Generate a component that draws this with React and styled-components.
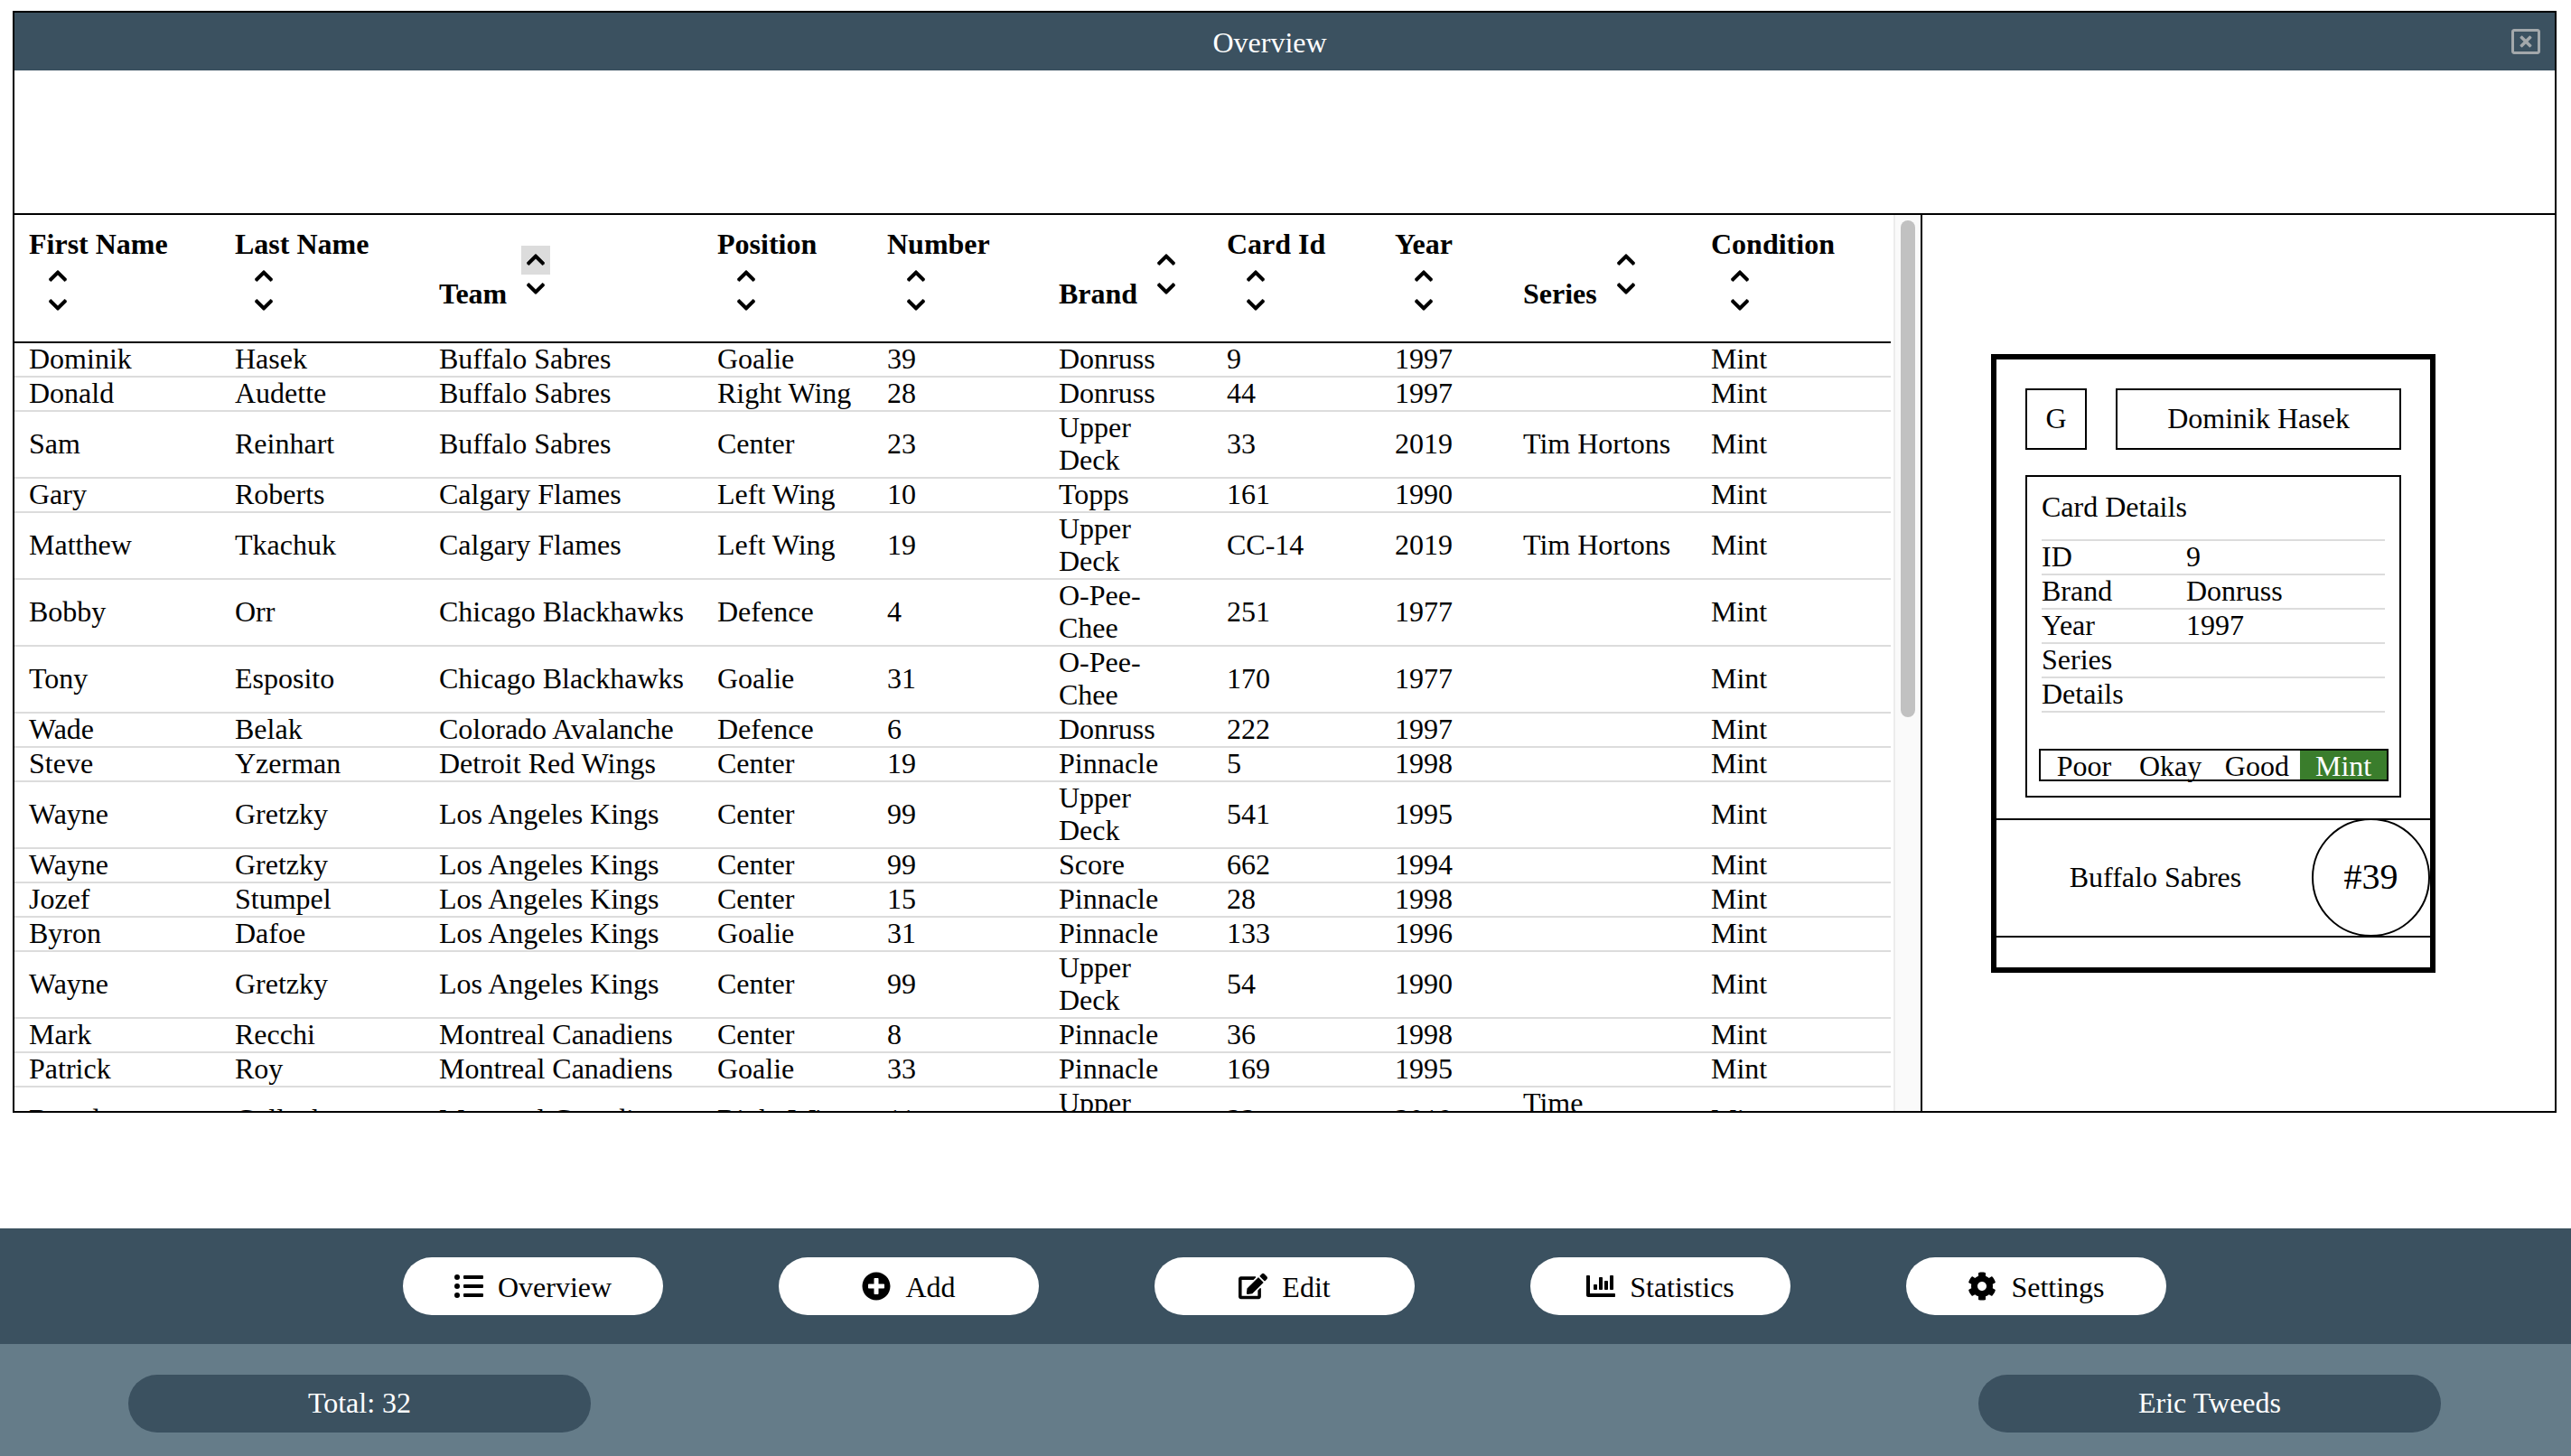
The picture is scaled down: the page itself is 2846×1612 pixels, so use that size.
import React from "react";
import styled, { createGlobalStyle } from "styled-components";
import {
  FaChartBar,
  FaChevronDown,
  FaChevronUp,
  FaCog,
  FaEdit,
  FaListUl,
  FaPlusCircle,
  FaRegWindowClose,
} from "react-icons/fa";

const slate = "#3b5160";
const slateLight = "#657c89";
const rule = "#dcdcdc";

const GlobalStyle = createGlobalStyle`
  * {
    box-sizing: border-box;
  }
  body {
    margin: 0;
    background: #fff;
    color: #000;
    font-family: "Liberation Serif", "Times New Roman", serif;
    font-size: 32px;
    line-height: 36px;
  }
`;

const Page = styled.div`
  display: flex;
  flex-direction: column;
  height: 100vh;
  overflow: hidden;
`;

const Main = styled.main`
  flex: 1;
  min-height: 0;
  padding: 12px 16px 0 14px;
`;

const Window = styled.section`
  display: flex;
  flex-direction: column;
  height: 1220px;
  border: 2px solid #000;
`;

const TitleBar = styled.header`
  display: flex;
  align-items: center;
  height: 64px;
  padding-right: 16px;
  background: ${slate};
`;

const Title = styled.h1`
  flex: 1;
  margin: 0;
  padding: 2px 0 0 15px;
  color: #fff;
  font-size: 32px;
  font-weight: normal;
  text-align: center;
`;

const CloseIcon = styled(FaRegWindowClose)`
  width: 32px;
  height: 32px;
  color: #a3a8ab;
`;

const FilterArea = styled.div`
  height: 160px;
  border-bottom: 2px solid #000;
`;

const Content = styled.div`
  flex: 1;
  min-height: 0;
  display: flex;
`;

const ListPane = styled.div`
  display: flex;
  width: 2112px;
  border-right: 2px solid #000;
`;

const TableViewport = styled.div`
  flex: 1;
  min-width: 0;
  overflow: hidden;
`;

const ScrollTrack = styled.div`
  flex: 0 0 30px;
  padding: 6px 6px 0;
  background: #fafafa;
  border-left: 2px solid #ececec;
`;

const ScrollThumb = styled.div`
  height: 550px;
  border-radius: 8px;
  background: #c1c1c1;
`;

const CardTable = styled.table`
  width: 2077px;
  table-layout: fixed;
  border-collapse: separate;
  border-spacing: 0;
`;

const HeadCell = styled.th`
  height: 142px;
  padding: 0 16px 4px;
  border-bottom: 2px solid #000;
  font-weight: bold;
  text-align: left;
  vertical-align: middle;
`;

const Cell = styled.td`
  padding: 0 16px;
  border-bottom: 2px solid ${rule};
  vertical-align: middle;
`;

const CellText = styled.div`
  min-height: 36px;
  margin: -1px 0 1px;
`;

const SortControl = styled.span`
  display: inline-block;
  width: 32px;
  height: 64px;
  margin: 2px 0 0 16px;
  overflow: hidden;
  vertical-align: baseline;
`;

const SortButton = styled.span`
  display: flex;
  align-items: center;
  justify-content: center;
  width: 32px;
  height: 32px;
  background: ${(p) => (p.$active ? rule : "transparent")};

  svg {
    width: 20px;
    height: 23px;
    stroke: currentColor;
    stroke-width: 16;
  }
`;

const CardPanel = styled.aside`
  flex: 1;
  display: flex;
  align-items: center;
  padding-left: 76px;
`;

const Card = styled.article`
  width: 492px;
  height: 685px;
  padding-top: 32px;
  border: 6px solid #000;
`;

const CardHead = styled.div`
  display: flex;
  gap: 32px;
  margin: 0 32px 28px;
`;

const Outlined = styled.div`
  display: flex;
  align-items: center;
  justify-content: center;
  height: 68px;
  padding-bottom: 2px;
  border: 2px solid #000;
`;

const PositionBox = styled(Outlined)`
  flex: 0 0 68px;
`;

const NameBox = styled(Outlined)`
  flex: 1;
`;

const Details = styled.div`
  height: 357px;
  margin: 0 32px 23px;
  padding: 15px 12px 0 13px;
  border: 2px solid #000;
`;

const DetailsTitle = styled.div`
  margin: 0 0 18px 3px;
`;

const DetailList = styled.div`
  margin: 0 4px 40px 3px;
  border-top: 2px solid ${rule};
`;

const DetailRow = styled.div`
  display: grid;
  grid-template-columns: 160px 1fr;
  height: 38px;
  border-bottom: 2px solid ${rule};
  line-height: 34px;
`;

const ConditionBar = styled.div`
  display: grid;
  grid-template-columns: repeat(4, 1fr);
  height: 36px;
  border: 2px solid #000;
`;

const Condition = styled.span`
  height: 32px;
  line-height: 34px;
  text-align: center;
  background: ${(p) => (p.$selected ? "#3a7d2c" : "transparent")};
  color: ${(p) => (p.$selected ? "#fff" : "#000")};
`;

const TeamBand = styled.div`
  display: flex;
  align-items: center;
  height: 132px;
  border-top: 2px solid #000;
  border-bottom: 2px solid #000;
`;

const TeamName = styled.div`
  flex: 1;
  padding: 0 0 2px 3px;
  text-align: center;
`;

const NumberBadge = styled.div`
  display: flex;
  align-items: center;
  justify-content: center;
  flex: 0 0 131px;
  height: 131px;
  padding-bottom: 2px;
  border: 2px solid #000;
  border-radius: 50%;
  background: #fff;
  font-size: 40px;
`;

const Nav = styled.nav`
  display: flex;
  align-items: center;
  justify-content: center;
  gap: 128px;
  height: 128px;
  padding-right: 2px;
  background: ${slate};
`;

const NavButton = styled.button`
  display: flex;
  align-items: center;
  justify-content: center;
  gap: 16px;
  width: 288px;
  height: 64px;
  padding: 0;
  border: none;
  border-radius: 32px;
  background: #fff;
  color: #000;
  font: inherit;

  svg {
    height: 32px;
    width: auto;
  }
`;

const NavLabel = styled.span`
  padding-top: 2px;
`;

const StatusBar = styled.footer`
  display: flex;
  align-items: center;
  justify-content: space-between;
  height: 124px;
  padding: 8px 144px 0 142px;
  background: ${slateLight};
`;

const StatusPill = styled.div`
  display: flex;
  align-items: center;
  justify-content: center;
  width: 512px;
  height: 64px;
  padding-bottom: 2px;
  border-radius: 32px;
  background: ${slate};
  color: #fff;
`;

const columns = [
  { label: "First Name", width: 228 },
  { label: "Last Name", width: 226 },
  { label: "Team", width: 308, active: true },
  { label: "Position", width: 188 },
  { label: "Number", width: 190 },
  { label: "Brand", width: 186 },
  { label: "Card Id", width: 186 },
  { label: "Year", width: 142 },
  { label: "Series", width: 208 },
  { label: "Condition", width: 215 },
];

const cards = [
  ["Dominik", "Hasek", "Buffalo Sabres", "Goalie", "39", "Donruss", "9", "1997", "", "Mint"],
  ["Donald", "Audette", "Buffalo Sabres", "Right Wing", "28", "Donruss", "44", "1997", "", "Mint"],
  ["Sam", "Reinhart", "Buffalo Sabres", "Center", "23", "Upper Deck", "33", "2019", "Tim Hortons", "Mint"],
  ["Gary", "Roberts", "Calgary Flames", "Left Wing", "10", "Topps", "161", "1990", "", "Mint"],
  ["Matthew", "Tkachuk", "Calgary Flames", "Left Wing", "19", "Upper Deck", "CC-14", "2019", "Tim Hortons", "Mint"],
  ["Bobby", "Orr", "Chicago Blackhawks", "Defence", "4", "O-Pee-Chee", "251", "1977", "", "Mint"],
  ["Tony", "Esposito", "Chicago Blackhawks", "Goalie", "31", "O-Pee-Chee", "170", "1977", "", "Mint"],
  ["Wade", "Belak", "Colorado Avalanche", "Defence", "6", "Donruss", "222", "1997", "", "Mint"],
  ["Steve", "Yzerman", "Detroit Red Wings", "Center", "19", "Pinnacle", "5", "1998", "", "Mint"],
  ["Wayne", "Gretzky", "Los Angeles Kings", "Center", "99", "Upper Deck", "541", "1995", "", "Mint"],
  ["Wayne", "Gretzky", "Los Angeles Kings", "Center", "99", "Score", "662", "1994", "", "Mint"],
  ["Jozef", "Stumpel", "Los Angeles Kings", "Center", "15", "Pinnacle", "28", "1998", "", "Mint"],
  ["Byron", "Dafoe", "Los Angeles Kings", "Goalie", "31", "Pinnacle", "133", "1996", "", "Mint"],
  ["Wayne", "Gretzky", "Los Angeles Kings", "Center", "99", "Upper Deck", "54", "1990", "", "Mint"],
  ["Mark", "Recchi", "Montreal Canadiens", "Center", "8", "Pinnacle", "36", "1998", "", "Mint"],
  ["Patrick", "Roy", "Montreal Canadiens", "Goalie", "33", "Pinnacle", "169", "1995", "", "Mint"],
  ["Brendan", "Gallagher", "Montreal Canadiens", "Right Wing", "11", "Upper Deck", "33", "2019", "Time Capsule", "Mint"],
];

const details = [
  ["ID", "9"],
  ["Brand", "Donruss"],
  ["Year", "1997"],
  ["Series", ""],
  ["Details", ""],
];

const conditions = ["Poor", "Okay", "Good", "Mint"];

const navItems = [
  { label: "Overview", Icon: FaListUl },
  { label: "Add", Icon: FaPlusCircle },
  { label: "Edit", Icon: FaEdit },
  { label: "Statistics", Icon: FaChartBar },
  { label: "Settings", Icon: FaCog },
];

const App = () => {
  return (
    <Page>
      <GlobalStyle />
      <Main>
        <Window>
          <TitleBar>
            <Title>Overview</Title>
            <CloseIcon />
          </TitleBar>
          <FilterArea />
          <Content>
            <ListPane>
              <TableViewport>
                <CardTable>
                  <colgroup>
                    {columns.map((c) => (
                      <col key={c.label} width={c.width} />
                    ))}
                  </colgroup>
                  <thead>
                    <tr>
                      {columns.map((c) => (
                        <HeadCell key={c.label}>
                          {c.label}
                          <SortControl>
                            <SortButton $active={c.active}>
                              <FaChevronUp />
                            </SortButton>
                            <SortButton>
                              <FaChevronDown />
                            </SortButton>
                          </SortControl>
                        </HeadCell>
                      ))}
                    </tr>
                  </thead>
                  <tbody>
                    {cards.map((card, i) => (
                      <tr key={i}>
                        {card.map((value, j) => (
                          <Cell key={j}>
                            <CellText>{value}</CellText>
                          </Cell>
                        ))}
                      </tr>
                    ))}
                  </tbody>
                </CardTable>
              </TableViewport>
              <ScrollTrack>
                <ScrollThumb />
              </ScrollTrack>
            </ListPane>
            <CardPanel>
              <Card>
                <CardHead>
                  <PositionBox>G</PositionBox>
                  <NameBox>Dominik Hasek</NameBox>
                </CardHead>
                <Details>
                  <DetailsTitle>Card Details</DetailsTitle>
                  <DetailList>
                    {details.map(([label, value]) => (
                      <DetailRow key={label}>
                        <span>{label}</span>
                        <span>{value}</span>
                      </DetailRow>
                    ))}
                  </DetailList>
                  <ConditionBar>
                    {conditions.map((c) => (
                      <Condition key={c} $selected={c === "Mint"}>
                        {c}
                      </Condition>
                    ))}
                  </ConditionBar>
                </Details>
                <TeamBand>
                  <TeamName>Buffalo Sabres</TeamName>
                  <NumberBadge>#39</NumberBadge>
                </TeamBand>
              </Card>
            </CardPanel>
          </Content>
        </Window>
      </Main>
      <Nav>
        {navItems.map(({ label, Icon }) => (
          <NavButton key={label}>
            <Icon />
            <NavLabel>{label}</NavLabel>
          </NavButton>
        ))}
      </Nav>
      <StatusBar>
        <StatusPill>Total: 32</StatusPill>
        <StatusPill>Eric Tweeds</StatusPill>
      </StatusBar>
    </Page>
  );
};

export default App;
